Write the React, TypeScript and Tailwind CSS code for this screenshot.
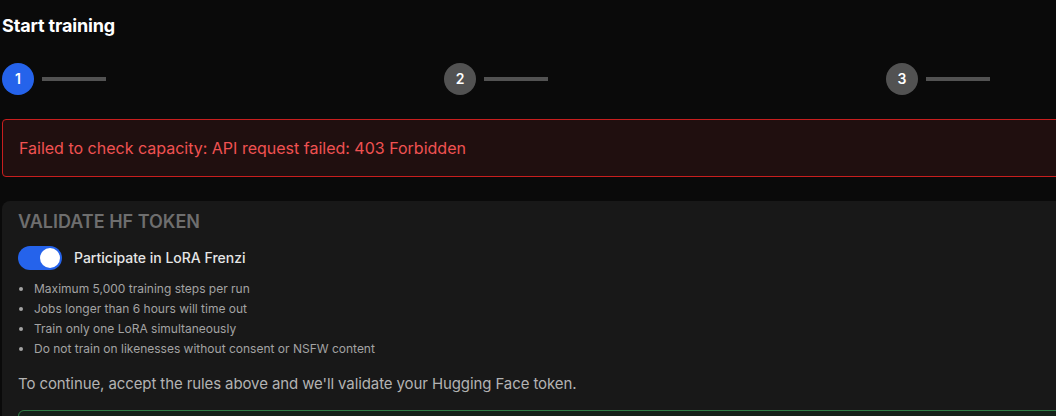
import { ReactNode } from "react";

function Step({ n, active }: { n: number; active?: boolean }) {
  return (
    <div className="flex items-center gap-2">
      <div
        className={`flex h-8 w-8 items-center justify-center rounded-full text-sm font-semibold text-white ${
          active ? "bg-[#2563eb]" : "bg-[#525252]"
        }`}
      >
        {n}
      </div>
      <div className="h-1 w-16 bg-[#525252]" />
    </div>
  );
}

function Rule({ children }: { children: ReactNode }) {
  return <li className="h-5 leading-5">{children}</li>;
}

export default function App() {
  return (
    <div
      className="h-[416px] w-[1056px] overflow-hidden bg-[#0a0a0a] text-white"
      style={{ fontFamily: "Inter, 'Noto Sans', sans-serif" }}
    >
      <div className="w-[1328px] pl-[2px]">
        <h1 className="pt-[15px] text-lg font-bold leading-[22px] tracking-[-0.15px] text-white">
          Start training
        </h1>

        <div className="mt-[26px] grid grid-cols-3 gap-0">
          <Step n={1} active />
          <Step n={2} />
          <Step n={3} />
        </div>

        <div className="mt-6 flex h-[58px] items-center rounded border border-[#c81e1e] bg-[#200f0f] px-4">
          <p className="text-base text-[#f05252]">
            Failed to check capacity: API request failed: 403 Forbidden
          </p>
        </div>

        <div className="mt-6 rounded-lg bg-[#181818] px-4 pt-[9px] pb-6">
          <h2 className="text-lg font-semibold uppercase leading-6 text-[#6e6e6e]">
            Validate HF token
          </h2>

          <div className="mt-[12px] flex items-center gap-3">
            <div className="flex h-6 w-11 items-center rounded-full bg-[#2563eb] p-[2px]">
              <div className="ml-auto h-5 w-5 rounded-full bg-white" />
            </div>
            <span className="text-sm font-medium text-[#e5e5e5]">Participate in LoRA Frenzi</span>
          </div>

          <ul className="mt-[9px] list-disc pl-4 text-xs text-[#a3a3a3]">
            <Rule>Maximum 5,000 training steps per run</Rule>
            <Rule>Jobs longer than 6 hours will time out</Rule>
            <Rule>Train only one LoRA simultaneously</Rule>
            <Rule>Do not train on likenesses without consent or NSFW content</Rule>
          </ul>

          <p className="mt-[15px] text-[15px] leading-5 tracking-[-0.1px] text-[#b3b3b3]">
            To continue, accept the rules above and we'll validate your Hugging Face token.
          </p>

          <div className="mt-[16px] h-20 rounded-md border border-[#2f7d46] bg-[#15211a]" />
        </div>
      </div>
    </div>
  );
}
